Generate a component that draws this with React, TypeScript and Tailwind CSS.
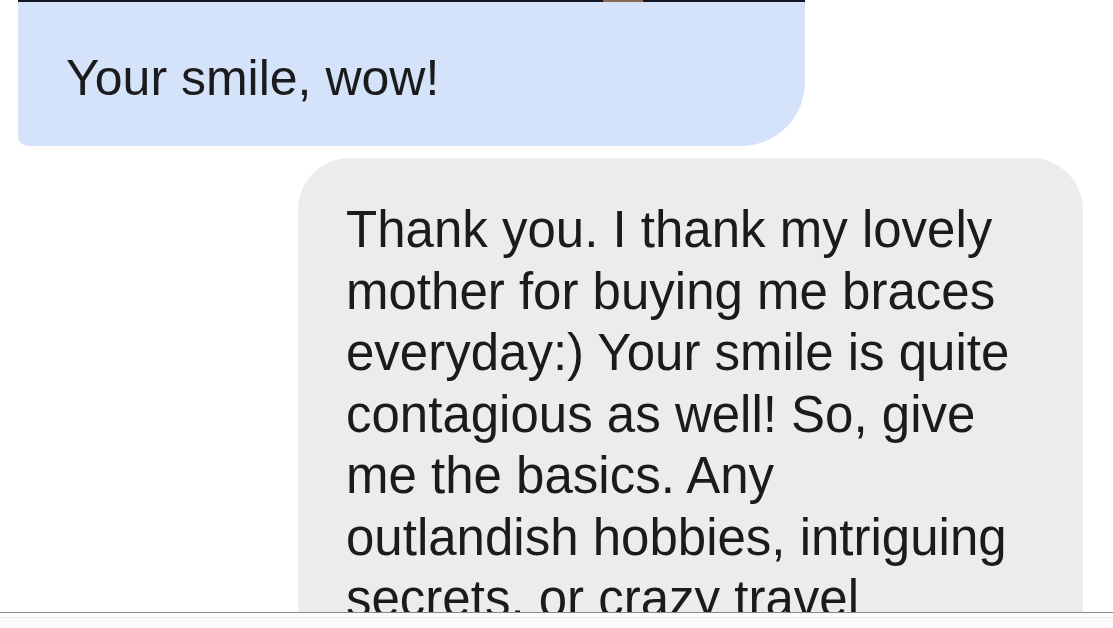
import React from 'react';

const reply = [
  'Thank you. I thank my lovely',
  'mother for buying me braces',
  'everyday:) Your smile is quite',
  'contagious as well! So, give',
  'me the basics. Any',
  'outlandish hobbies, intriguing',
  'secrets. or crazy travel',
];

const App: React.FC = () => {
  return (
    <div
      className="h-[628px] w-[1113px] bg-white flex flex-col overflow-hidden text-[#1b1b1d]"
      style={{ fontFamily: '"Liberation Sans", Arial, sans-serif' }}
    >
      <div className="flex-1 overflow-hidden">
        {/* their message (photo edge above it) */}
        <div className="ml-[18px] w-[787px]">
          <div className="h-[2px] bg-[#141826] flex">
            <div className="ml-[585px] w-[40px] bg-[#8a6a55]" />
          </div>
          <div className="h-[144px] bg-[#d5e3fa] rounded-bl-[10px] rounded-br-[64px] pl-[48px] pt-[46px]">
            <p className="text-[50px] leading-[61.5px] whitespace-nowrap">Your smile, wow!</p>
          </div>
        </div>

        {/* my reply */}
        <div className="mt-[12px] ml-[298px] w-[785px] bg-[#ececec] rounded-t-[52px] pl-[48px] pt-[41px] pb-[40px]">
          {reply.map((line) => (
            <div key={line} className="text-[51px] leading-[61.5px] whitespace-nowrap">
              {line}
            </div>
          ))}
        </div>
      </div>

      {/* bottom bar */}
      <div className="h-[16px] shrink-0 border-t border-[#8c8c8c] bg-[#fbfbfb]">
        <div className="mt-[4px] h-px bg-[#efefef]" />
      </div>
    </div>
  );
};

export default App;
